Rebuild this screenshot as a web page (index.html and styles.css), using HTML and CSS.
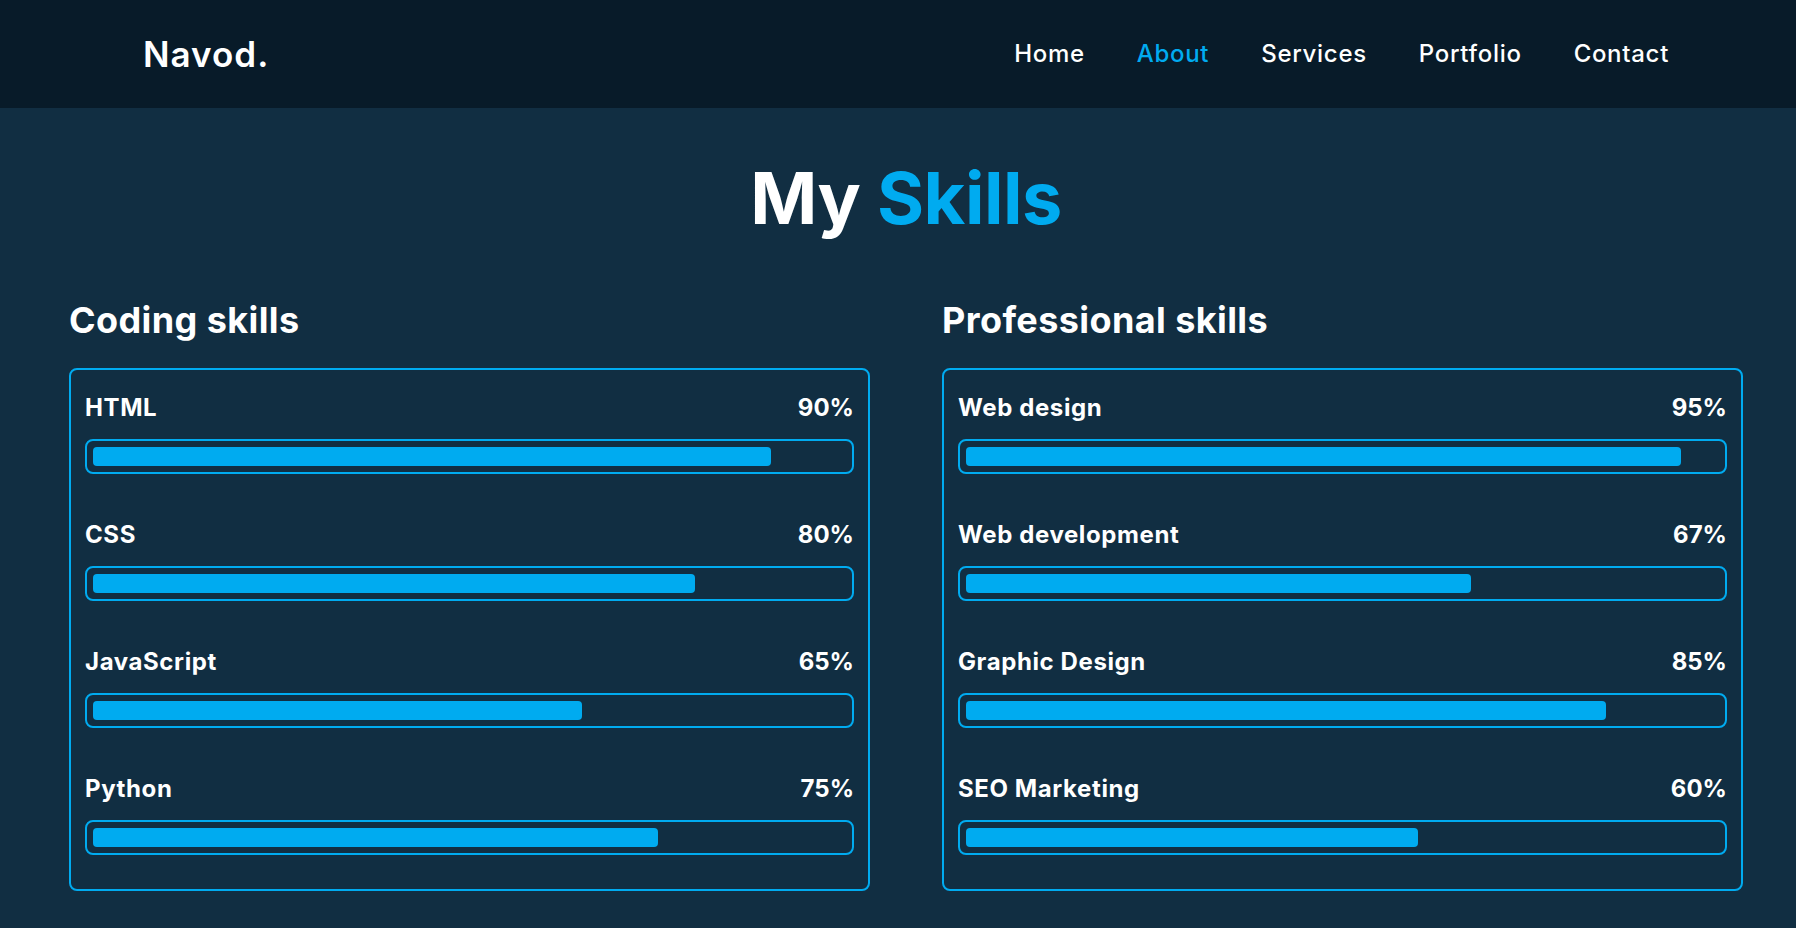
FILE: index.html
```html
<!DOCTYPE html>
<html lang="en">
<head>
<meta charset="utf-8">
<title>Navod. - My Skills</title>
<link rel="stylesheet" href="styles.css">
</head>
<body>
<header class="header">
  <a class="logo" href="#">Navod.</a>
  <nav class="nav">
    <a href="#" class="nav-link">Home</a>
    <a href="#" class="nav-link active">About</a>
    <a href="#" class="nav-link">Services</a>
    <a href="#" class="nav-link">Portfolio</a>
    <a href="#" class="nav-link">Contact</a>
  </nav>
</header>
<section class="skills">
  <h2 class="heading">My <span class="accent">Skills</span></h2>
  <div class="columns">
    <div class="column">
      <h3 class="column-title">Coding skills</h3>
      <div class="card">
        <div class="skill">
          <div class="skill-head"><span>HTML</span><span class="pct">90%</span></div>
          <div class="bar"><span class="fill" style="width:90%"></span></div>
        </div>
        <div class="skill">
          <div class="skill-head"><span>CSS</span><span class="pct">80%</span></div>
          <div class="bar"><span class="fill" style="width:80%"></span></div>
        </div>
        <div class="skill">
          <div class="skill-head"><span>JavaScript</span><span class="pct">65%</span></div>
          <div class="bar"><span class="fill" style="width:65%"></span></div>
        </div>
        <div class="skill">
          <div class="skill-head"><span>Python</span><span class="pct">75%</span></div>
          <div class="bar"><span class="fill" style="width:75%"></span></div>
        </div>
      </div>
    </div>
    <div class="column">
      <h3 class="column-title">Professional skills</h3>
      <div class="card">
        <div class="skill">
          <div class="skill-head"><span>Web design</span><span class="pct">95%</span></div>
          <div class="bar"><span class="fill" style="width:95%"></span></div>
        </div>
        <div class="skill">
          <div class="skill-head"><span>Web development</span><span class="pct">67%</span></div>
          <div class="bar"><span class="fill" style="width:67%"></span></div>
        </div>
        <div class="skill">
          <div class="skill-head"><span>Graphic Design</span><span class="pct">85%</span></div>
          <div class="bar"><span class="fill" style="width:85%"></span></div>
        </div>
        <div class="skill">
          <div class="skill-head"><span>SEO Marketing</span><span class="pct">60%</span></div>
          <div class="bar"><span class="fill" style="width:60%"></span></div>
        </div>
      </div>
    </div>
  </div>
</section>
</body>
</html>
```
FILE: styles.css
```css
* {
  margin: 0;
  padding: 0;
  box-sizing: border-box;
}

html, body {
  height: 100%;
}

body {
  font-family: "Inter", "Noto Sans", sans-serif;
  background: #112e42;
  color: #ffffff;
  overflow: hidden;
}

a {
  text-decoration: none;
  color: inherit;
}

.header {
  height: 108px;
  background: #081b29;
  display: flex;
  align-items: center;
  justify-content: space-between;
  padding: 0 127px 0 143px;
}

.logo {
  font-size: 35px;
  font-weight: 600;
  line-height: 1;
  letter-spacing: 1px;
  color: #ffffff;
}

.nav {
  display: flex;
  gap: 52px;
}

.nav-link {
  font-size: 24px;
  font-weight: 500;
  line-height: 1;
  letter-spacing: 0.7px;
  color: #ffffff;
}

.nav-link.active {
  color: #00abf0;
}

.skills {
  padding: 54px 53px 0 69px;
}

.heading {
  text-align: center;
  font-size: 72px;
  font-weight: 700;
  line-height: 72px;
  letter-spacing: -0.5px;
}

.accent {
  color: #00abf0;
}

.columns {
  display: grid;
  grid-template-columns: 1fr 1fr;
  column-gap: 72px;
  margin-top: 68px;
}

.column-title {
  font-size: 36px;
  font-weight: 700;
  line-height: 36px;
  letter-spacing: 0.4px;
  margin-bottom: 30px;
}

.card {
  border: 2px solid #00abf0;
  border-radius: 8px;
  padding: 26px 14px 34px;
  display: flex;
  flex-direction: column;
  gap: 49px;
}

.skill-head {
  display: flex;
  justify-content: space-between;
  font-size: 24px;
  font-weight: 700;
  line-height: 24px;
  letter-spacing: 0.6px;
}

.pct {
  letter-spacing: 0;
}

.bar {
  margin-top: 19px;
  height: 35px;
  border: 2px solid #00abf0;
  border-radius: 8px;
  padding: 6px;
}

.fill {
  display: block;
  height: 100%;
  background: #00abf0;
  border-radius: 4px;
}
```
